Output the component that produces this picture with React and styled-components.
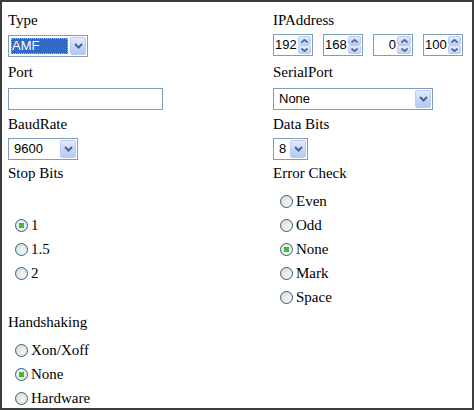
import styled, { createGlobalStyle } from "styled-components";

const Global = createGlobalStyle`
  html, body { margin: 0; padding: 0; background: #fff; }
`;

export default function App() {
  return (
    <>
      <Global />
      <Frame>
        <Row $mt={0}>
          <Field $gap={6}>
            <Label>Type</Label>
            <Combo value="AMF" width={80} selected />
          </Field>
          <Field $gap={6}>
            <Label>IPAddress</Label>
            <IpRow>
              {["192", "168", "0", "100"].map((v, i) => (
                <Spin key={i}>
                  <SpinText>{v}</SpinText>
                  <SpinButtons>
                    <SpinHalf>
                      <Chevron up />
                    </SpinHalf>
                    <SpinHalf>
                      <Chevron />
                    </SpinHalf>
                  </SpinButtons>
                </Spin>
              ))}
            </IpRow>
          </Field>
        </Row>

        <Row $mt={6}>
          <Field $gap={7}>
            <Label>Port</Label>
            <TextBox />
          </Field>
          <Field $gap={7}>
            <Label>SerialPort</Label>
            <Combo value="None" width={160} />
          </Field>
        </Row>

        <Row $mt={5}>
          <Field $gap={5}>
            <Label>BaudRate</Label>
            <Combo value="9600" width={70} />
          </Field>
          <Field $gap={5}>
            <Label>Data Bits</Label>
            <Combo value="8" width={35} />
          </Field>
        </Row>

        <Row $mt={4}>
          <Field $gap={7}>
            <Label>Stop Bits</Label>
            <RadioList $center>
              <Radio label="1" checked />
              <Radio label="1.5" />
              <Radio label="2" />
            </RadioList>
          </Field>
          <Field $gap={7}>
            <Label>Error Check</Label>
            <RadioList>
              <Radio label="Even" />
              <Radio label="Odd" />
              <Radio label="None" checked />
              <Radio label="Mark" />
              <Radio label="Space" />
            </RadioList>
          </Field>
        </Row>

        <Row $mt={4}>
          <Field $gap={7}>
            <Label>Handshaking</Label>
            <RadioList>
              <Radio label="Xon/Xoff" />
              <Radio label="None" checked />
              <Radio label="Hardware" />
            </RadioList>
          </Field>
        </Row>
      </Frame>
    </>
  );
}

function Chevron({ up }) {
  return (
    <svg width="7" height="4" viewBox="0 0 7 4">
      <polyline
        points={up ? "0.5,3.5 3.5,0.8 6.5,3.5" : "0.5,0.5 3.5,3.2 6.5,0.5"}
        fill="none"
        stroke="#4d6185"
        strokeWidth="1.6"
      />
    </svg>
  );
}

function Combo({ value, width, selected }) {
  return (
    <ComboBox style={{ width }}>
      <ComboValue $selected={selected}>{value}</ComboValue>
      <DropButton>
        <svg width="9" height="6" viewBox="0 0 9 6">
          <polyline
            points="1,1 4.5,4.5 8,1"
            fill="none"
            stroke="#4d6185"
            strokeWidth="2"
          />
        </svg>
      </DropButton>
    </ComboBox>
  );
}

function Radio({ label, checked }) {
  return (
    <RadioRow>
      <RadioDot $checked={checked} />
      <span>{label}</span>
    </RadioRow>
  );
}

const Frame = styled.div`
  width: 474px;
  height: 410px;
  box-sizing: border-box;
  border: 2px solid #3c3c3c;
  background: #fff;
  padding: 9px 6px 0;
  overflow: hidden;
  font-family: "Liberation Serif", "Times New Roman", serif;
  font-size: 15px;
  color: #000;
`;

const Row = styled.div`
  display: grid;
  grid-template-columns: 265px 1fr;
  margin-top: ${(p) => p.$mt}px;
`;

const Field = styled.div`
  display: flex;
  flex-direction: column;
  align-items: flex-start;
  gap: ${(p) => p.$gap}px;
`;

const Label = styled.div`
  line-height: 18px;
  height: 18px;
`;

const ComboBox = styled.div`
  box-sizing: border-box;
  height: 22px;
  border: 1px solid #7f9db9;
  background: #fff;
  padding: 1px;
  display: flex;
  font-family: "Liberation Sans", Arial, sans-serif;
  font-size: 13px;
`;

const ComboValue = styled.div`
  flex: 1;
  margin: 1px 2px 1px 1px;
  padding-left: ${(p) => (p.$selected ? 1 : 3)}px;
  line-height: 16px;
  color: ${(p) => (p.$selected ? "#fff" : "#000")};
  background: ${(p) => (p.$selected ? "#316ac5" : "transparent")};
  outline: ${(p) => (p.$selected ? "1px dotted #e8b84c" : "none")};
  outline-offset: -1px;
`;

const DropButton = styled.div`
  box-sizing: border-box;
  width: 16px;
  flex: none;
  border: 1px solid #b9cbf6;
  border-radius: 2px;
  background: linear-gradient(#e3ebfe, #c2d4fb 60%, #b3c8f6);
  display: flex;
  align-items: center;
  justify-content: center;
`;

const IpRow = styled.div`
  display: flex;
  gap: 10px;
  margin-top: -1px;
`;

const Spin = styled.div`
  box-sizing: border-box;
  width: 40px;
  height: 22px;
  border: 1px solid #7f9db9;
  padding: 1px;
  display: flex;
  font-family: "Liberation Sans", Arial, sans-serif;
  font-size: 13px;
`;

const SpinText = styled.div`
  flex: 1;
  text-align: right;
  line-height: 18px;
  padding-right: 1px;
`;

const SpinButtons = styled.div`
  width: 14px;
  display: flex;
  flex-direction: column;
`;

const SpinHalf = styled.div`
  flex: 1;
  box-sizing: border-box;
  border: 1px solid #b9cbf6;
  border-radius: 2px;
  background: linear-gradient(#e3ebfe, #bcd0f9);
  display: flex;
  align-items: center;
  justify-content: center;
`;

const TextBox = styled.div`
  box-sizing: border-box;
  width: 155px;
  height: 22px;
  border: 1px solid #7f9db9;
  background: #fff;
`;

const RadioList = styled.div`
  display: flex;
  flex-direction: column;
  justify-content: ${(p) => (p.$center ? "center" : "flex-start")};
  flex: 1;
  align-self: stretch;
`;

const RadioRow = styled.div`
  height: 24px;
  display: flex;
  align-items: center;
  gap: 3px;
  padding-left: 7px;
  line-height: 18px;
`;

const RadioDot = styled.span`
  box-sizing: border-box;
  width: 13px;
  height: 13px;
  margin-top: 1px;
  border-radius: 50%;
  border: 1px solid #2c5e8f;
  background: ${(p) =>
    p.$checked
      ? "radial-gradient(circle at 50% 50%, #3bc43b 0 2.2px, #1e9a1e 2.4px 2.8px, #f4f4f0 3px, #dcdcd4 100%)"
      : "radial-gradient(circle at 65% 65%, #f8f8f4, #d6d5cc)"};
`;
